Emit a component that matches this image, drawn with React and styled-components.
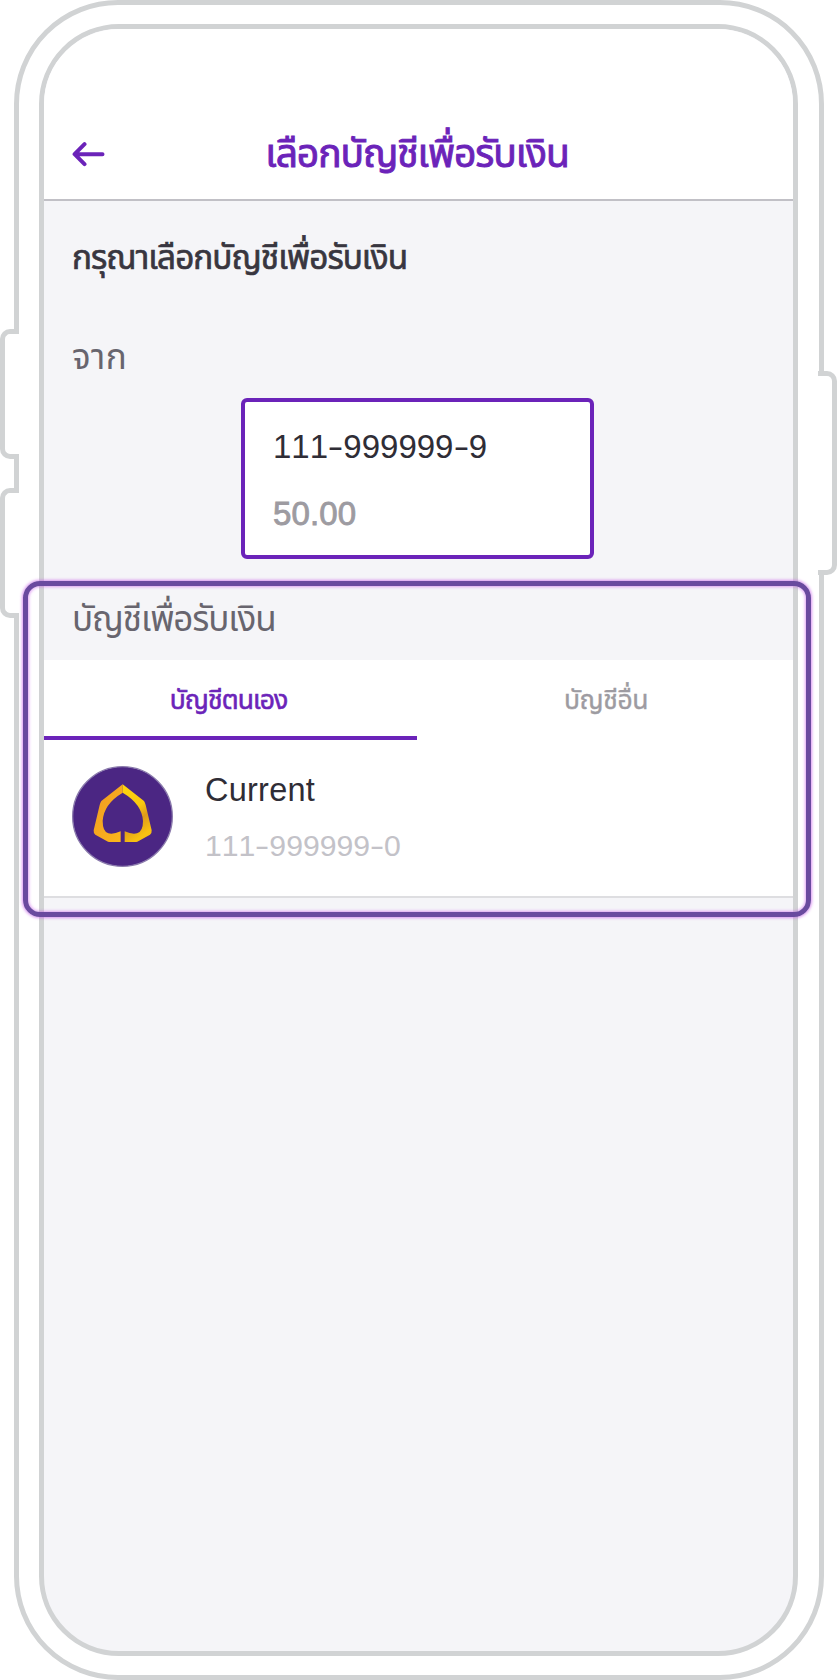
import React from "react";
import styled, { createGlobalStyle } from "styled-components";

const purple = "#6b23b9";
const frame = "#d1d3d4";

const GlobalStyle = createGlobalStyle`
  *, *::before, *::after { box-sizing: border-box; }
  body {
    margin: 0;
    background: #fff;
    font-family: "Liberation Sans", "Noto Sans Thai", sans-serif;
    font-kerning: none;
  }
`;

const Page = styled.main`
  position: relative;
  width: 837px;
  height: 1680px;
  padding: 0 13px 0 14px;
  overflow: hidden;
`;

const Device = styled.div`
  height: 1680px;
  padding: 19px 21px 19px 20px;
  border: 5px solid ${frame};
  border-radius: 104px;
`;

const SideButton = styled.span`
  position: absolute;
  top: ${(p) => p.$top}px;
  ${(p) => p.$side}: 0;
  width: 19px;
  height: ${(p) => p.$height}px;
  background: #fff;
  border: 5px solid ${frame};
  border-${(p) => (p.$side === "left" ? "right" : "left")}: 0;
  border-radius: ${(p) => (p.$side === "left" ? "10px 0 0 10px" : "0 10px 10px 0")};
`;

const Screen = styled.div`
  height: 1632px;
  border: 5px solid ${frame};
  border-radius: 80px;
  background: #f5f5f8;
  overflow: hidden;
`;

const Header = styled.header`
  display: grid;
  grid-template-columns: 64px 1fr 64px;
  align-items: center;
  height: 172px;
  padding: 96px 3px 16px 0;
  background: #fff;
  border-bottom: 2px solid #c1c0c6;
`;

const BackButton = styled.button`
  display: flex;
  padding: 0 0 0 28px;
  border: 0;
  background: none;
  color: ${purple};
`;

const Title = styled.h1`
  margin: 0;
  text-align: center;
  font-size: 39px;
  line-height: 58px;
  letter-spacing: -1.1px;
  font-weight: 400;
  color: ${purple};
  white-space: nowrap;
  -webkit-text-stroke: 0.9px currentColor;
`;

const Section = styled.section`
  display: flex;
  flex-direction: column;
  padding: 27px 28px 11px;
`;

const Prompt = styled.h2`
  margin: 0;
  font-size: 33.3px;
  line-height: 60px;
  letter-spacing: -0.95px;
  font-weight: 400;
  color: #38363f;
  -webkit-text-stroke: 0.7px currentColor;
`;

const Label = styled.p`
  margin: ${(p) => p.$gap}px 0 0;
  font-size: 35px;
  line-height: 60px;
  letter-spacing: ${(p) => p.$tracking || 0}px;
  color: #68656e;
`;

const SourceCard = styled.div`
  width: 353px;
  height: 161px;
  margin: 11px 0 0 169px;
  padding: 25px 28px 0;
  background: #fff;
  border: 4px solid ${purple};
  border-radius: 6px;
`;

const AccountNumber = styled.div`
  font-size: ${(p) => p.$size}px;
  line-height: 40px;
  color: ${(p) => p.$color};
  white-space: nowrap;
`;

const Dash = styled.span`
  display: inline-block;
  margin: 0 0.065em;
  transform: scaleX(1.45);
`;

const Balance = styled.div`
  margin-top: 27px;
  font-size: 33px;
  line-height: 40px;
  letter-spacing: 0.15px;
  color: #9d9ba1;
  -webkit-text-stroke: 0.9px currentColor;
`;

const Tabs = styled.nav`
  display: grid;
  grid-template-columns: 373px 1fr;
  height: 80px;
  background: #fff;
`;

const Tab = styled.button`
  display: flex;
  justify-content: center;
  padding: 11px ${(p) => (p.$active ? 4 : 2)}px 0 ${(p) => (p.$active ? 0 : 4)}px;
  border: 0;
  border-bottom: 4px solid ${(p) => (p.$active ? purple : "transparent")};
  background: none;
  font-family: inherit;
  font-size: 26.5px;
  line-height: 59px;
  letter-spacing: ${(p) => (p.$active ? -0.9 : -0.4)}px;
  color: ${(p) => (p.$active ? purple : "#9d9ba1")};
  -webkit-text-stroke: ${(p) => (p.$active ? 0.6 : 0.4)}px currentColor;
`;

const AccountRow = styled.div`
  display: flex;
  gap: 32px;
  height: 158px;
  padding: 26px 28px 0;
  background: #fff;
  border-bottom: 2px solid #dedee1;
`;

const AccountText = styled.div`
  display: flex;
  flex-direction: column;
  gap: 16px;
  padding-top: 4px;
`;

const AccountName = styled.div`
  font-size: 32.5px;
  line-height: 40px;
  letter-spacing: 0.25px;
  color: #2f2d36;
`;

const Highlight = styled.div`
  position: absolute;
  top: 581px;
  left: 23px;
  width: 788px;
  height: 336px;
  border: 5px solid #6a4a9f;
  border-radius: 17px;
  box-shadow: 0 0 3px 1px rgba(200, 90, 235, 0.65), inset 0 0 3px 1px rgba(200, 90, 235, 0.55);
  pointer-events: none;
`;

function BackArrow() {
  return (
    <svg width="34" height="26" viewBox="0 0 34 26" fill="none" stroke="currentColor" strokeWidth="4" strokeLinecap="round" strokeLinejoin="round">
      <path d="M30.500 13.200H3M12.500 3.200L2.600 13.200l9.900 10" />
    </svg>
  );
}

function BankLogo() {
  return (
    <svg width="101" height="101" viewBox="36 33 303 303">
      <defs>
        <linearGradient id="leafLeft" x1="0" y1="0" x2="1" y2="1">
          <stop offset="0" stopColor="#ee9a22" />
          <stop offset="0.5" stopColor="#f7a81f" />
          <stop offset="1" stopColor="#fcb81a" />
        </linearGradient>
        <linearGradient id="leafRight" x1="0" y1="0" x2="0.35" y2="1">
          <stop offset="0" stopColor="#ffd60c" />
          <stop offset="0.5" stopColor="#f9c80f" />
          <stop offset="0.72" stopColor="#dd9a1c" />
          <stop offset="1" stopColor="#f8c011" />
        </linearGradient>
      </defs>
      <circle cx="187.500" cy="184.500" r="149.500" fill="#4b2683" stroke="#8a7aac" strokeWidth="4" />
      <path fill="url(#leafLeft)" d="M188 88L124 138Q121 142 119 150L101 226Q100 234 106 239L144 260Q147 261 151 261H182V229Q160 239 145 235Q128 230 128 198Q131 147 188 113Z" />
      <path fill="url(#leafRight)" d="M188 88L252 138Q255 142 257 150L275 226Q276 234 270 239L232 260Q229 261 225 261H194V229Q216 239 231 235Q249 230 249 198Q246 147 188 113Z" />
    </svg>
  );
}

function DashedNumber({ value, ...rest }) {
  return (
    <AccountNumber {...rest}>
      {value.split("-").map((part, i) => (
        <React.Fragment key={i}>
          {i > 0 && <Dash>-</Dash>}
          {part}
        </React.Fragment>
      ))}
    </AccountNumber>
  );
}

export default function App() {
  return (
    <>
      <GlobalStyle />
      <Page>
        <Device>
          <Screen>
            <Header>
              <BackButton aria-label="ย้อนกลับ">
                <BackArrow />
              </BackButton>
              <Title>เลือกบัญชีเพื่อรับเงิน</Title>
            </Header>
            <Section>
              <Prompt>กรุณาเลือกบัญชีเพื่อรับเงิน</Prompt>
              <Label $gap={39} $tracking={0.5}>จาก</Label>
              <SourceCard>
                <DashedNumber value="111-999999-9" $size={33} $color="#2f2d36" />
                <Balance>50.00</Balance>
              </SourceCard>
              <Label $gap={30} $tracking={-1.1}>บัญชีเพื่อรับเงิน</Label>
            </Section>
            <Tabs>
              <Tab $active>บัญชีตนเอง</Tab>
              <Tab>บัญชีอื่น</Tab>
            </Tabs>
            <AccountRow>
              <BankLogo />
              <AccountText>
                <AccountName>Current</AccountName>
                <DashedNumber value="111-999999-0" $size={30.2} $color="#c3c2c8" />
              </AccountText>
            </AccountRow>
          </Screen>
        </Device>
        <SideButton $side="left" $top={329} $height={130} />
        <SideButton $side="left" $top={488} $height={130} />
        <SideButton $side="right" $top={371} $height={204} />
        <Highlight />
      </Page>
    </>
  );
}
